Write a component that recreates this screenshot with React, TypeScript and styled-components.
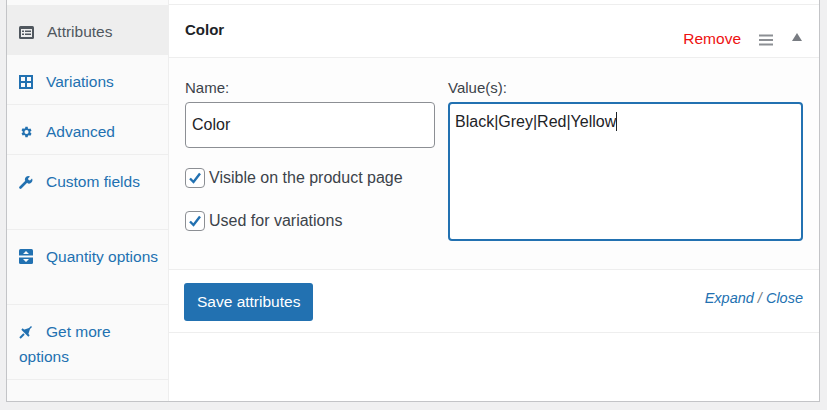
import styled, { createGlobalStyle } from "styled-components";

const Global = createGlobalStyle`
  html, body { margin: 0; background: #f0f0f1; }
  body { font-family: "Liberation Sans", Arial, sans-serif; color: #1d2327; }
`;

const Panel = styled.div`
  margin-left: 6px;
  width: 814px;
  height: 402px;
  box-sizing: border-box;
  background: #fff;
  border: 1px solid #c3c4c7;
  border-top: none;
  display: flex;
`;

const Sidebar = styled.ul`
  list-style: none;
  margin: 0;
  padding: 5px 0 0;
  width: 163px;
  background: #fafafa;
  border-right: 1px solid #eee;
`;

const Tab = styled.li<{ $active?: boolean }>`
  border-bottom: 1px solid #eee;
  background: ${({ $active }) => ($active ? "#eee" : "transparent")};
  color: ${({ $active }) => ($active ? "#50575e" : "#2271b1")};
  font-size: 15.5px;
  line-height: 25px;
  padding: 14px 10px 11px 12px;
  height: ${({ $tall }: { $tall?: boolean }) => ($tall ? "75px" : "50px")};
  box-sizing: border-box;
  svg { vertical-align: -2px; margin-right: 13px; }
`;

const Main = styled.div`
  flex: 1;
  display: flex;
  flex-direction: column;
  padding-top: 4px;
  border-top: 1px solid #eee;
  margin-top: 4px;
`;

const Header = styled.div`
  height: 53px;
  box-sizing: border-box;
  display: flex;
  align-items: flex-start;
  padding: 16px 16px 0 16px;
  border-bottom: 1px solid #eee;
  margin-top: -4px;
`;

const Title = styled.div`
  font-weight: bold;
  font-size: 15px;
  flex: 1;
`;

const Remove = styled.span`
  color: #e11;
  font-size: 15.5px;
  margin-top: 9px;
  margin-right: 18px;
`;

const Grip = styled.span`
  margin-top: 11px;
  margin-right: 18px;
`;

const Body = styled.div`
  background: #fdfdfd;
  height: 212px;
  box-sizing: border-box;
  border-bottom: 1px solid #eee;
  display: flex;
  gap: 13px;
  padding: 21px 16px 0;
`;

const Col = styled.div<{ $w: string }>`
  width: ${({ $w }) => $w};
  display: flex;
  flex-direction: column;
`;

const Label = styled.label`
  font-size: 15px;
  color: #3c434a;
  margin-bottom: 6px;
`;

const TextInput = styled.div`
  height: 46px;
  box-sizing: border-box;
  border: 1px solid #8c8f94;
  border-radius: 4px;
  background: #fff;
  font-size: 16px;
  padding: 13px 6px;
  margin-bottom: 19px;
`;

const Check = styled.div`
  display: flex;
  align-items: center;
  gap: 4px;
  font-size: 16px;
  color: #3c434a;
  height: 22px;
  margin-bottom: 21px;
`;

const Box = styled.span`
  width: 18px;
  height: 18px;
  border: 1px solid #8c8f94;
  border-radius: 4px;
  background: #fff;
  display: flex;
  align-items: center;
  justify-content: center;
`;

const Textarea = styled.div`
  height: 139px;
  box-sizing: border-box;
  border: 2px solid #2271b1;
  border-radius: 4px;
  background: #fff;
  font-size: 16px;
  padding: 8px 5px;
  position: relative;
`;

const Caret = styled.span`
  display: inline-block;
  width: 1px;
  height: 19px;
  background: #1d2327;
  vertical-align: -4px;
`;

const Footer = styled.div`
  height: 63px;
  box-sizing: border-box;
  border-bottom: 1px solid #eee;
  display: flex;
  align-items: center;
  justify-content: space-between;
  padding: 0 16px 0 15px;
`;

const Button = styled.button`
  background: #2271b1;
  color: #fff;
  border: none;
  border-radius: 3px;
  font-family: inherit;
  font-size: 15.5px;
  height: 38px;
  padding: 0 13px;
  margin-top: 2px;
`;

const Links = styled.span`
  font-style: italic;
  font-size: 14.5px;
  color: #2271b1;
  margin-bottom: 6px;
  span { color: #787c82; }
`;

const Tick = () => (
  <svg width="14" height="14" viewBox="0 0 14 14">
    <path d="M2 7.5 L5.5 11 L12 2.5" stroke="#2271b1" strokeWidth="2.4" fill="none" />
  </svg>
);

export default function App() {
  return (
    <>
      <Global />
      <Panel>
        <Sidebar>
          <Tab $active>
            <svg width="15" height="13" viewBox="0 0 15 13"><rect x="0" y="0" width="15" height="13" rx="1.5" fill="#50575e" /><rect x="2" y="3" width="11" height="8" fill="#eee" /><rect x="3" y="4.5" width="2" height="1.5" fill="#50575e" /><rect x="6" y="4.5" width="6" height="1.5" fill="#50575e" /><rect x="3" y="7.5" width="2" height="1.5" fill="#50575e" /><rect x="6" y="7.5" width="6" height="1.5" fill="#50575e" /></svg>
            Attributes
          </Tab>
          <Tab>
            <svg width="14" height="14" viewBox="0 0 14 14"><path d="M1 1h12v12H1zM7 1v12M1 7h12" stroke="#2271b1" strokeWidth="2" fill="none" /></svg>
            Variations
          </Tab>
          <Tab>
            <svg width="14" height="14" viewBox="0 0 24 24"><path fill="#2271b1" d="M19.4 13a7.5 7.5 0 0 0 0-2l2.1-1.6-2-3.5-2.5 1a7.6 7.6 0 0 0-1.7-1L14.9 3h-4l-.4 2.6a7.6 7.6 0 0 0-1.7 1l-2.5-1-2 3.5L6.4 11a7.5 7.5 0 0 0 0 2l-2.1 1.6 2 3.5 2.5-1a7.6 7.6 0 0 0 1.7 1l.4 2.9h4l.4-2.6a7.6 7.6 0 0 0 1.7-1l2.5 1 2-3.5zM12.9 15.5a3.5 3.5 0 1 1 0-7 3.5 3.5 0 0 1 0 7z" /></svg>
            Advanced
          </Tab>
          <Tab $tall>
            <svg width="14" height="14" viewBox="0 0 14 14"><path d="M1.5 12.5 L7 7" stroke="#2271b1" strokeWidth="2.6" strokeLinecap="round" /><path d="M6 5.5a3.5 3.5 0 0 1 5-4l-2 2 .5 1.5 1.5.5 2-2a3.5 3.5 0 0 1-4 5z" fill="#2271b1" /></svg>
            Custom fields
          </Tab>
          <Tab $tall>
            <svg width="14" height="15" viewBox="0 0 14 15"><rect x="0" y="0" width="14" height="15" rx="1.5" fill="#2271b1" /><rect x="0" y="6.5" width="14" height="2" fill="#fafafa" /><path d="M4 5 7 2 10 5zM4 10 7 13 10 10z" fill="#fafafa" /></svg>
            Quantity options
          </Tab>
          <Tab $tall>
            <svg width="14" height="14" viewBox="0 0 14 14"><path d="M1 13 L5 9" stroke="#2271b1" strokeWidth="2" /><path d="M4 5 L9 10 L11 4 L13 2 L12 1 L10 3z" fill="#2271b1" /><path d="M3 4 L10 11" stroke="#2271b1" strokeWidth="2" /></svg>
            Get more options
          </Tab>
        </Sidebar>
        <Main>
          <Header>
            <Title>Color</Title>
            <Remove>Remove</Remove>
            <Grip>
              <svg width="14" height="12" viewBox="0 0 14 12"><path d="M0 1.5h14M0 6h14M0 10.5h14" stroke="#8c8f94" strokeWidth="2" /></svg>
            </Grip>
            <svg width="12" height="10" viewBox="0 0 12 10" style={{ marginTop: 11 }}><path d="M6 1 11 9H1z" fill="#787c82" /></svg>
          </Header>
          <Body>
            <Col $w="250px">
              <Label>Name:</Label>
              <TextInput>Color</TextInput>
              <Check><Box><Tick /></Box>Visible on the product page</Check>
              <Check><Box><Tick /></Box>Used for variations</Check>
            </Col>
            <Col $w="355px">
              <Label>Value(s):</Label>
              <Textarea>Black|Grey|Red|Yellow<Caret /></Textarea>
            </Col>
          </Body>
          <Footer>
            <Button>Save attributes</Button>
            <Links>Expand <span>/</span> Close</Links>
          </Footer>
        </Main>
      </Panel>
    </>
  );
}
